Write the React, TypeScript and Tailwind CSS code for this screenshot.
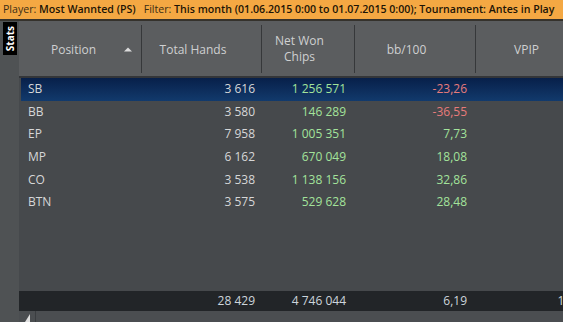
const rows = [
  { pos: 'SB', hands: '3 616', won: '1 256 571', bb: '-23,26', neg: true, selected: true },
  { pos: 'BB', hands: '3 580', won: '146 289', bb: '-36,55', neg: true },
  { pos: 'EP', hands: '7 958', won: '1 005 351', bb: '7,73' },
  { pos: 'MP', hands: '6 162', won: '670 049', bb: '18,08' },
  { pos: 'CO', hands: '3 538', won: '1 138 156', bb: '32,86' },
  { pos: 'BTN', hands: '3 575', won: '529 628', bb: '28,48' },
]

const font = { fontFamily: '"Open Sans", "Noto Sans", sans-serif' }

export default function App() {
  return (
    <div className="w-[563px] h-[322px] overflow-hidden flex flex-col bg-[#46494c]" style={font}>
      {/* filter bar */}
      <div className="h-[21px] shrink-0 bg-[#f4a843] border-b-2 border-[#35322c] flex items-center pl-[3px] text-[10.6px] leading-none whitespace-nowrap text-[#1c1406]">
        <span className="text-[#3a2c14]">Player:&nbsp;</span>
        <span className="font-semibold">Most Wannted (PS)</span>
        <span className="text-[#3a2c14] ml-[8px]">Filter:&nbsp;</span>
        <span className="font-semibold">This month (01.06.2015 0:00 to 01.07.2015 0:00); Tournament: Antes in Play</span>
      </div>

      <div className="flex flex-1 min-h-0">
        {/* left strip */}
        <div className="w-[19px] shrink-0 bg-[#4f5254] pt-[1px] pl-[3px]">
          <div className="w-[14px] h-[33px] bg-black flex items-center justify-center">
            <span className="[writing-mode:vertical-rl] rotate-180 text-white text-[10px] font-bold leading-none">Stats</span>
          </div>
        </div>

        <div className="flex-1 min-w-0 flex flex-col">
          {/* header */}
          <div className="h-[55px] shrink-0 bg-[#5b5d5f] pt-[4px] pb-[3px] grid grid-cols-[123px_120px_93px_121px_118px] text-[12px] text-[#cfd0d1] leading-[16.5px]">
            <div className="flex items-center border-r border-[#36383a] pl-[4px] pt-[2px]">
              <span className="flex-1 text-center">Position</span>
              <svg width="8" height="5" viewBox="0 0 8 5" className="mr-[9px] -mt-[2px]">
                <path d="M0 4.5 L4 0.5 L8 4.5 Z" fill="#dcdcdc" />
              </svg>
            </div>
            <div className="flex items-center justify-center border-r border-[#36383a] pr-[17px] pt-[2px]">Total Hands</div>
            <div className="flex items-center justify-center border-r border-[#36383a] pr-[17px] text-center">
              Net Won<br />Chips
            </div>
            <div className="flex items-center justify-center border-r border-[#36383a] pr-[17px] pt-[2px]">bb/100</div>
            <div className="flex items-center justify-center pr-[17px] pt-[2px]">VPIP</div>
          </div>
          <div className="h-[2px] shrink-0 bg-[#343639]" />

          {/* rows */}
          <div className="flex-1 min-h-0 pl-[2px] text-[12px]">
            {rows.map((r) => (
              <div
                key={r.pos}
                className={`h-[22.6px] grid grid-cols-[121px_120px_93px_121px_118px] items-center ${
                  r.selected ? 'bg-gradient-to-b from-[#08204a] to-[#123a6c]' : ''
                }`}
              >
                <div className="pl-[7px] text-[#d6d7d8]">{r.pos}</div>
                <div className="text-right pr-[7px] text-[#d6d7d8]">{r.hands}</div>
                <div className="text-right pr-[9px] text-[#a3e39b]">{r.won}</div>
                <div className={`text-right pr-[9px] ${r.neg ? 'text-[#e77b7b]' : 'text-[#a3e39b]'}`}>{r.bb}</div>
                <div />
              </div>
            ))}
          </div>

          {/* totals */}
          <div className="h-[20px] shrink-0 bg-[#222528] grid grid-cols-[123px_120px_93px_121px_118px] items-center text-[12px] text-[#cdd5dc] whitespace-nowrap">
            <div />
            <div className="text-right pr-[7px]">28 429</div>
            <div className="text-right pr-[9px]">4 746 044</div>
            <div className="text-right pr-[9px]">6,19</div>
            <div className="text-right pr-[6px]">15,42</div>
          </div>

          {/* scrollbar */}
          <div className="h-[11px] shrink-0 bg-[#4b4e51] flex items-end">
            <div className="w-[17px] h-full border-r border-[#3a3d40] flex items-end justify-center">
              <svg width="5" height="8" viewBox="0 0 5 8">
                <path d="M5 0 L0 8 L5 8 Z" fill="#e0e0e0" />
              </svg>
            </div>
          </div>
        </div>
      </div>
    </div>
  )
}
